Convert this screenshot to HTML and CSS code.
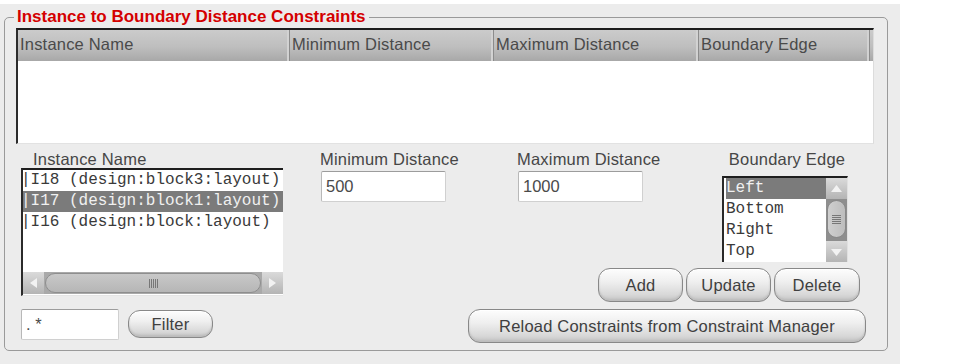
FILE: index.html
```html
<!DOCTYPE html>
<html lang="en">
<head>
    <meta charset="UTF-8">
    <title>Instance to Boundary Distance Constraints</title>
    <link rel="stylesheet" href="styles.css">
</head>
<body>
    <div class="page">
        <fieldset class="panel">
            <legend>Instance to Boundary Distance Constraints</legend>

            <div class="constraint-table">
                <div class="thead">
                    <div class="th">Instance Name</div>
                    <div class="th">Minimum Distance</div>
                    <div class="th">Maximum Distance</div>
                    <div class="th">Boundary Edge</div>
                    <div class="th filler"></div>
                </div>
                <div class="tbody">
                    <!-- rows of constraints go here -->
                </div>
            </div>

            <div class="editor">
                <div class="inst-col">
                    <div class="field-label inst-label">Instance Name</div>
                    <div class="listbox inst-list">
                        <div class="rows">
                            <div class="row">|I18 (design:block3:layout)</div>
                            <div class="row selected">|I17 (design:block1:layout)</div>
                            <div class="row">|I16 (design:block:layout)</div>
                        </div>
                        <div class="hscroll">
                            <div class="sb-btn">
                                <svg width="21" height="22" viewBox="0 0 21 22"><polygon points="7,11 14,6 14,16" fill="#f2f2f2"/></svg>
                            </div>
                            <div class="h-thumb"><span class="grip-v"></span></div>
                            <div class="sb-btn">
                                <svg width="21" height="22" viewBox="0 0 21 22"><polygon points="14,11 7,6 7,16" fill="#f2f2f2"/></svg>
                            </div>
                        </div>
                    </div>
                    <div class="filter-row">
                        <input class="text-input filter-input" type="text" value=". *">
                        <button class="btn filter-btn">Filter</button>
                    </div>
                </div>

                <div class="right-col">
                    <div class="fields">
                        <div class="field min-field">
                            <div class="field-label">Minimum Distance</div>
                            <input class="text-input dist-input" type="text" value="500">
                        </div>
                        <div class="field max-field">
                            <div class="field-label">Maximum Distance</div>
                            <input class="text-input dist-input" type="text" value="1000">
                        </div>
                        <div class="field edge-field">
                            <div class="field-label edge-label">Boundary Edge</div>
                            <div class="listbox edge-list">
                                <div class="rows">
                                    <div class="row selected">Left</div>
                                    <div class="row">Bottom</div>
                                    <div class="row">Right</div>
                                    <div class="row">Top</div>
                                </div>
                                <div class="vscroll">
                                    <div class="sb-btn">
                                        <svg width="21" height="21" viewBox="0 0 21 21"><polygon points="10.5,7 16,14 5,14" fill="#f2f2f2"/></svg>
                                    </div>
                                    <div class="v-track">
                                        <div class="v-thumb"><span class="grip-h"></span></div>
                                    </div>
                                    <div class="sb-btn">
                                        <svg width="21" height="21" viewBox="0 0 21 21"><polygon points="10.5,15 16,8 5,8" fill="#f2f2f2"/></svg>
                                    </div>
                                </div>
                            </div>
                        </div>
                    </div>

                    <div class="btn-row edit-btns">
                        <button class="btn">Add</button>
                        <button class="btn">Update</button>
                        <button class="btn delete-btn">Delete</button>
                    </div>
                    <div class="btn-row">
                        <button class="btn reload-btn">Reload Constraints from Constraint Manager</button>
                    </div>
                </div>
            </div>
        </fieldset>
    </div>
</body>
</html>
```

FILE: styles.css
```css
body {
    margin: 0;
    padding: 0;
    background-color: #fff;
    font-family: "Liberation Sans", Arial, sans-serif;
    font-size: 16.5px;
    color: #464646;
}
.page {
    width: 900px;
    height: 360px;
    margin-top: 4px;
    padding: 2px 0 0 4px;
    box-sizing: border-box;
    background-color: #ececec;
}
.panel {
    box-sizing: border-box;
    width: 884px;
    min-inline-size: 0;
    margin: 0;
    padding: 0 13px 7px 11px;
    border: 1px solid #9a9a9a;
    border-radius: 5px;
}
.panel legend {
    margin-left: -2px;
    padding: 0 3px;
    font-size: 17px;
    font-weight: bold;
    line-height: 22px;
    color: #d40000;
}

/* table */
.constraint-table {
    border-top: 2px solid #1c1c1c;
    border-left: 2px solid #2c2c2c;
    border-right: 1px solid #dcdcdc;
    border-bottom: 1px solid #e2e2e2;
    background-color: #fff;
}
.thead {
    display: grid;
    grid-template-columns: 272px 204px 205px 171px 1fr;
    height: 31px;
    background: linear-gradient(#cbcbcb, #bebebe 55%, #a8a8a8);
}
.th {
    padding: 0 0 2px 2px;
    line-height: 29px;
    color: #4a4a4a;
    letter-spacing: 0.2px;
    white-space: nowrap;
    border-right: 1px solid #8c8c8c;
    box-shadow: inset -2px 0 0 #d2d2d2;
}
.th.filler {
    border-right: none;
    box-shadow: none;
}
.tbody {
    height: 82px;
}

/* lower editor */
.editor {
    display: flex;
    margin-top: 6px;
}
.field-label {
    line-height: 18px;
    letter-spacing: 0.2px;
    white-space: nowrap;
}
.inst-col {
    width: 262px;
    padding-left: 5px;
}
.inst-label {
    padding-left: 12px;
}
.listbox {
    display: flex;
    background-color: #fff;
    border-top: 2px solid #1e1e1e;
    border-left: 2px solid #2a2a2a;
    font-family: "Liberation Mono", "Courier New", monospace;
    font-size: 16px;
    color: #3a3a3a;
}
.row {
    height: 21px;
    line-height: 21px;
    white-space: nowrap;
}
.row.selected {
    background-color: #7b7b7b;
    color: #f0f0f0;
}
.inst-list {
    flex-direction: column;
    height: 125px;
    border-bottom: 1px solid #e4e4e4;
}
.inst-list .rows {
    height: 102px;
    text-indent: -2px;
}
.hscroll {
    display: flex;
    height: 22px;
    background-color: #a9a9a9;
}
.sb-btn {
    display: flex;
    background: linear-gradient(#dadada, #b4b4b4);
}
.h-thumb {
    flex: 1;
    display: flex;
    align-items: center;
    justify-content: center;
    margin: 1px 1px;
    border: 1px solid #8e8e8e;
    border-radius: 11px;
    background: linear-gradient(#c8c8c8, #b6b6b6);
}
.grip-v {
    width: 9px;
    height: 9px;
    background: repeating-linear-gradient(90deg, #777 0 1px, transparent 1px 2px);
}
.filter-row {
    display: flex;
    align-items: flex-start;
    margin-top: 13px;
}
.text-input {
    box-sizing: border-box;
    height: 31px;
    margin: 0;
    padding: 0 4px;
    border: 1px solid #d0d0d0;
    border-top-color: #9c9c9c;
    border-left-color: #b8b8b8;
    border-radius: 2px;
    background-color: #fff;
    font-family: "Liberation Sans", Arial, sans-serif;
    font-size: 16.5px;
    color: #4a4a4a;
}
.filter-input {
    width: 98px;
}
.btn {
    box-sizing: border-box;
    height: 34px;
    padding: 0;
    border: 1px solid #888;
    border-radius: 12px;
    background: linear-gradient(#fdfdfd, #efefef 40%, #d8d8d8 80%, #c4c4c4);
    box-shadow: inset 0 1px 0 #fff, inset 0 -2px 2px #bdbdbd;
    font-family: "Liberation Sans", Arial, sans-serif;
    font-size: 16.5px;
    letter-spacing: 0.2px;
    color: #404040;
}
.filter-btn {
    width: 85px;
    height: 28px;
    margin: 1px 0 0 9px;
}

.right-col {
    flex: 1;
}
.fields {
    display: flex;
}
.field {
    box-sizing: border-box;
}
.min-field {
    width: 197px;
    margin-left: 37px;
}
.max-field {
    width: 205px;
}
.edge-field {
    width: 126px;
}
.dist-input {
    width: 125px;
    margin: 3px 0 0 1px;
}
.edge-label {
    text-align: center;
    padding-left: 4px;
}
.edge-list {
    height: 84px;
    margin-top: 8px;
    border-right: 1px solid #e0e0e0;
}
.edge-list .rows {
    flex: 1;
    padding-left: 2px;
}
.vscroll {
    display: flex;
    flex-direction: column;
    width: 21px;
}
.v-track {
    flex: 1;
    display: flex;
    padding: 1px 1px 3px;
    background-color: #8e8e8e;
}
.v-thumb {
    flex: 1;
    display: flex;
    align-items: center;
    justify-content: center;
    border: 1px solid #888;
    border-radius: 10px;
    background: linear-gradient(90deg, #cfcfcf, #bdbdbd);
}
.grip-h {
    width: 9px;
    height: 9px;
    background: repeating-linear-gradient(#777 0 1px, transparent 1px 2px);
}

.btn-row {
    display: flex;
    gap: 3px;
}
.edit-btns {
    margin: 6px 0 0 315px;
}
.edit-btns .btn {
    width: 85px;
}
.edit-btns .delete-btn {
    width: 86px;
}
.reload-btn {
    width: 398px;
    margin: 7px 0 0 185px;
}
```
